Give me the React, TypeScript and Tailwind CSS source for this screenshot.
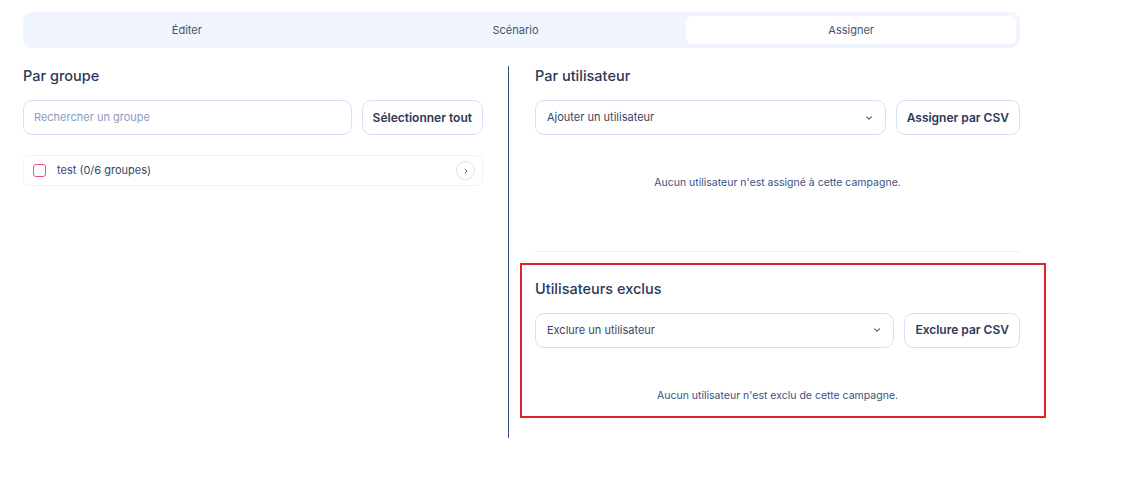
import React from "react";

const font = { fontFamily: "Inter, 'Noto Sans', sans-serif" };

function ChevronDown() {
  return (
    <svg width="8" height="6" viewBox="0 0 8 6" fill="none">
      <path d="M1.5 1.8 L4 4.2 L6.5 1.8" stroke="#4a5a80" strokeWidth="1.1" strokeLinecap="round" strokeLinejoin="round" />
    </svg>
  );
}

function Select({ label }: { label: string }) {
  return (
    <div className="flex-1 h-[35px] rounded-[9px] border border-[#d6e0f5] bg-white flex items-center justify-between pl-[11px] pr-[12px]">
      <span className="text-[11px] text-[#3a4666]">{label}</span>
      <ChevronDown />
    </div>
  );
}

function Btn({ label }: { label: string }) {
  return (
    <div className="h-[35px] rounded-[9px] border border-[#d6e0f5] bg-white flex items-center justify-center px-[10px] text-[12px] font-semibold text-[#2c3858] whitespace-nowrap">
      {label}
    </div>
  );
}

export default function App() {
  return (
    <div className="bg-white w-[1125px] h-[490px]" style={font}>
      <div className="ml-[23px] pt-[12px] w-[997px]">
        <div className="h-[36px] rounded-[9px] bg-[#f0f5fe] p-[4px] grid grid-cols-3">
          <div className="flex items-center justify-center pr-[10px] pt-px text-[11px] text-[#46526f]">Éditer</div>
          <div className="flex items-center justify-center pr-[12px] pt-px text-[11px] text-[#46526f]">Scénario</div>
          <div className="flex items-center justify-center pt-px text-[11px] text-[#46526f] bg-white rounded-[6px]">Assigner</div>
        </div>

        <div className="flex mt-[18px]">
          <div className="w-[460px]">
            <div className="h-[20px] flex items-center text-[14.5px] font-medium text-[#2c3858]">Par groupe</div>
            <div className="flex gap-[10px] mt-[14px]">
              <div className="flex-1 h-[35px] rounded-[9px] border border-[#d6e0f5] bg-white flex items-center pl-[10px]">
                <span className="text-[11px] text-[#8e9cc0]">Rechercher un groupe</span>
              </div>
              <Btn label="Sélectionner tout" />
            </div>
            <div className="mt-[20px] h-[31px] rounded-[6px] border border-[#eef2f9] flex items-center pl-[9px] pr-[7px]">
              <div className="w-[13px] h-[13px] rounded-[3px] border-[1.5px] border-[#ec4f74]" />
              <span className="ml-[11px] text-[11px] text-[#3a4666]">test (0/6 groupes)</span>
              <div className="ml-auto w-[19px] h-[19px] rounded-full border border-[#d6e0f5] flex items-center justify-center">
                <svg width="6" height="6" viewBox="0 0 6 6" fill="none">
                  <path d="M2 1.2 L4 3 L2 4.8" stroke="#4a5a80" strokeWidth="1" strokeLinecap="round" strokeLinejoin="round" />
                </svg>
              </div>
            </div>
          </div>

          <div className="ml-[25px] w-px bg-[#3b4d7e]" />

          <div className="flex-1 pl-[26px] pb-[20px]">
            <div className="h-[20px] flex items-center text-[14.5px] font-medium text-[#2c3858]">Par utilisateur</div>
            <div className="flex gap-[10px] mt-[14px]">
              <Select label="Ajouter un utilisateur" />
              <Btn label="Assigner par CSV" />
            </div>
            <div className="mt-[40px] text-center text-[10.5px] text-[#3e5080]">Aucun utilisateur n'est assigné à cette campagne.</div>
            <div className="mt-[60px] h-px bg-[#edf1f8]" />
            <div className="mt-[11px] ml-[-15px] mr-[-26px] border-2 border-[#e3222a] pl-[13px] pr-[24px] pt-[14px] pb-[12px]">
              <div className="h-[20px] flex items-center text-[14.5px] font-medium text-[#2c3858]">Utilisateurs exclus</div>
              <div className="flex gap-[10px] mt-[14px]">
                <Select label="Exclure un utilisateur" />
                <Btn label="Exclure par CSV" />
              </div>
              <div className="mt-[40px] text-center text-[10.5px] text-[#3e5080]">Aucun utilisateur n'est exclu de cette campagne.</div>
            </div>
          </div>
        </div>
      </div>
    </div>
  );
}
